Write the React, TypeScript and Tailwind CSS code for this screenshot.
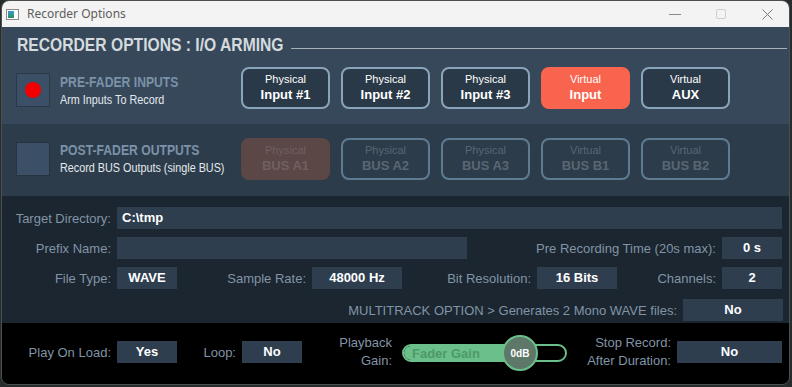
type ArmState = "off" | "on" | "dis" | "disOn";

const sans = "font-['Liberation_Sans',Arial,sans-serif]";

function ArmButton({ top, main, state }: { top: string; main: string; state: ArmState }) {
    const box = {
        off: "border-2 border-[#8aa4b9] bg-[#2a3947] text-white",
        on: "border-2 border-[#f8644e] bg-[#f8644e] text-white",
        dis: "border-2 border-[#5f7b92] bg-transparent text-[#5a6672]",
        disOn: "border-2 border-[#5b4746] bg-[#5b4746] text-[#70605f]",
    }[state];
    return (
        <div className={`w-[89px] h-[42px] rounded-[8px] flex flex-col items-center justify-center ${box}`}>
            <span className="text-[11px] leading-[13px]">{top}</span>
            <span className="text-[13px] leading-[17px] font-bold">{main}</span>
        </div>
    );
}

function Field({ value, w }: { value?: string; w: string }) {
    return (
        <div className={`${w} h-[22px] bg-[#2e3e4f] flex items-center justify-center text-white text-[13px] font-bold`}>
            {value}
        </div>
    );
}

function Label({ text, w }: { text: string; w: string }) {
    return <div className={`${w} shrink-0 text-right pr-[6px] text-[#8294a6] text-[13px] leading-[15px]`}>{text}</div>;
}

export default function App() {
    return (
        <div className={`w-[792px] h-[387px] bg-[#272c2d] pl-[1px] ${sans}`}>
            <div className="w-[789px] h-[385px] rounded-[8px] overflow-hidden border border-[#4a4f52] flex flex-col">
                {/* Title bar */}
                <div className="h-[26px] shrink-0 bg-[#f3f3f3] flex items-center">
                    <div className="ml-[4px] w-[13px] h-[11px] border border-[#8b8b8b] bg-white flex p-[1px]">
                        <div className="w-[6px] h-full bg-gradient-to-b from-[#3a9ad0] to-[#2f8f5a]"></div>
                    </div>
                    <span className="ml-[8px] text-[12px] text-[#5d5d5d] font-['Noto_Sans',sans-serif]">Recorder Options</span>
                    <div className="flex-1"></div>
                    <div className="w-[12px] h-[1px] bg-[#8a8a8a] mr-[35px]"></div>
                    <div className="w-[10px] h-[10px] border border-[#cfcfcf] rounded-[2px] mr-[36px]"></div>
                    <svg className="w-[11px] h-[11px] mr-[16px]" viewBox="0 0 11 11">
                        <path d="M0.5 0.5 L10.5 10.5 M10.5 0.5 L0.5 10.5" stroke="#7a7a7a" strokeWidth="1" />
                    </svg>
                </div>

                {/* Header + pre-fader */}
                <div className="bg-[#36485a] shrink-0">
                    <div className="h-[29px] flex items-end pl-[15px] pb-[1px]">
                        <span className="inline-block w-[266px] text-[18px] leading-[20px] font-bold text-[#d4dade] origin-left scale-x-[0.87] whitespace-nowrap">
                            RECORDER OPTIONS : I/O ARMING
                        </span>
                        <div className="flex-1 h-[1px] bg-[#a7b1ba] mb-[6px] ml-[8px] mr-[2px]"></div>
                    </div>
                    <div className="h-[68px] flex items-center pl-[14px]">
                        <div className="w-[34px] h-[34px] bg-[#3b5066] border border-[#2b3a48] flex items-center justify-center">
                            <div className="w-[16px] h-[16px] rounded-full bg-[#f00000]"></div>
                        </div>
                        <div className="w-[181px] ml-[10px] flex flex-col">
                            <span className="inline-block text-[14px] leading-[16px] font-bold text-[#7b92a8] origin-left scale-x-[0.87] whitespace-nowrap">PRE-FADER INPUTS</span>
                            <span className="inline-block mt-[3px] text-[12px] leading-[14px] text-[#e4e9ed] origin-left scale-x-[0.9] whitespace-nowrap">Arm Inputs To Record</span>
                        </div>
                        <div className="flex gap-[11px] -mt-[5px]">
                            <ArmButton top="Physical" main="Input #1" state="off" />
                            <ArmButton top="Physical" main="Input #2" state="off" />
                            <ArmButton top="Physical" main="Input #3" state="off" />
                            <ArmButton top="Virtual" main="Input" state="on" />
                            <ArmButton top="Virtual" main="AUX" state="off" />
                        </div>
                    </div>
                </div>

                {/* Post-fader */}
                <div className="h-[72px] shrink-0 bg-[#2c3c4b] flex items-center pl-[14px] pb-[3px]">
                    <div className="w-[34px] h-[34px] bg-[#3b5066] border border-[#263441]"></div>
                    <div className="w-[181px] ml-[10px] flex flex-col">
                        <span className="inline-block text-[14px] leading-[16px] font-bold text-[#7b92a8] origin-left scale-x-[0.87] whitespace-nowrap">POST-FADER OUTPUTS</span>
                        <span className="inline-block mt-[3px] text-[12px] leading-[14px] text-[#e4e9ed] origin-left scale-x-[0.9] whitespace-nowrap">Record BUS Outputs (single BUS)</span>
                    </div>
                    <div className="flex gap-[11px]">
                        <ArmButton top="Physical" main="BUS A1" state="disOn" />
                        <ArmButton top="Physical" main="BUS A2" state="dis" />
                        <ArmButton top="Physical" main="BUS A3" state="dis" />
                        <ArmButton top="Virtual" main="BUS B1" state="dis" />
                        <ArmButton top="Virtual" main="BUS B2" state="dis" />
                    </div>
                </div>

                {/* Settings */}
                <div className="h-[127px] shrink-0 bg-[#1b2630] pt-[11px] flex flex-col">
                    <div className="flex items-center">
                        <Label text="Target Directory:" w="w-[115px]" />
                        <div className="w-[665px] h-[22px] bg-[#2e3e4f] flex items-center pl-[5px] text-white text-[13px] font-bold">C:\tmp</div>
                    </div>
                    <div className="flex items-center mt-[8px]">
                        <Label text="Prefix Name:" w="w-[115px]" />
                        <Field w="w-[350px]" />
                        <Label text="Pre Recording Time (20s max):" w="w-[255px]" />
                        <Field value="0 s" w="w-[60px]" />
                    </div>
                    <div className="flex items-center mt-[8px]">
                        <Label text="File Type:" w="w-[115px]" />
                        <Field value="WAVE" w="w-[60px]" />
                        <Label text="Sample Rate:" w="w-[135px]" />
                        <Field value="48000 Hz" w="w-[90px]" />
                        <Label text="Bit Resolution:" w="w-[135px]" />
                        <Field value="16 Bits" w="w-[80px]" />
                        <Label text="Channels:" w="w-[105px]" />
                        <Field value="2" w="w-[60px]" />
                    </div>
                    <div className="flex items-center mt-[10px]">
                        <Label text="MULTITRACK OPTION > Generates 2 Mono WAVE files:" w="w-[681px]" />
                        <Field value="No" w="w-[100px]" />
                    </div>
                </div>

                {/* Playback */}
                <div className="flex-1 bg-black flex items-center pb-[3px]">
                    <Label text="Play On Load:" w="w-[115px]" />
                    <Field value="Yes" w="w-[60px]" />
                    <Label text="Loop:" w="w-[65px] pr-[4px]" />
                    <Field value="No" w="w-[60px]" />
                    <div className="w-[95px] shrink-0 text-right pr-[5px] text-[#8294a6] text-[13px] leading-[18px]">
                        Playback<br />Gain:
                    </div>
                    <div className="relative w-[165px] h-[18px] ml-[5px] rounded-full border-2 border-[#6bbf8b] mt-[2px]">
                        <div className="absolute left-0 top-0 bottom-0 w-[118px] bg-[#6bbf8b] rounded-l-full flex items-center pl-[8px]">
                            <span className="text-[13px] font-bold text-[#4d9a66] leading-none">Fader Gain</span>
                        </div>
                        <div className="absolute left-[98px] top-[-11px] w-[36px] h-[36px] rounded-full bg-[#5d7769] border-2 border-[#6bbf8b] flex items-center justify-center">
                            <span className="text-[10px] font-bold text-white">0dB</span>
                        </div>
                    </div>
                    <div className="w-[110px] shrink-0 text-right pr-[6px] text-[#8294a6] text-[13px] leading-[18px]">
                        Stop Record:<br />After Duration:
                    </div>
                    <Field value="No" w="w-[105px]" />
                </div>
            </div>
        </div>
    );
}
